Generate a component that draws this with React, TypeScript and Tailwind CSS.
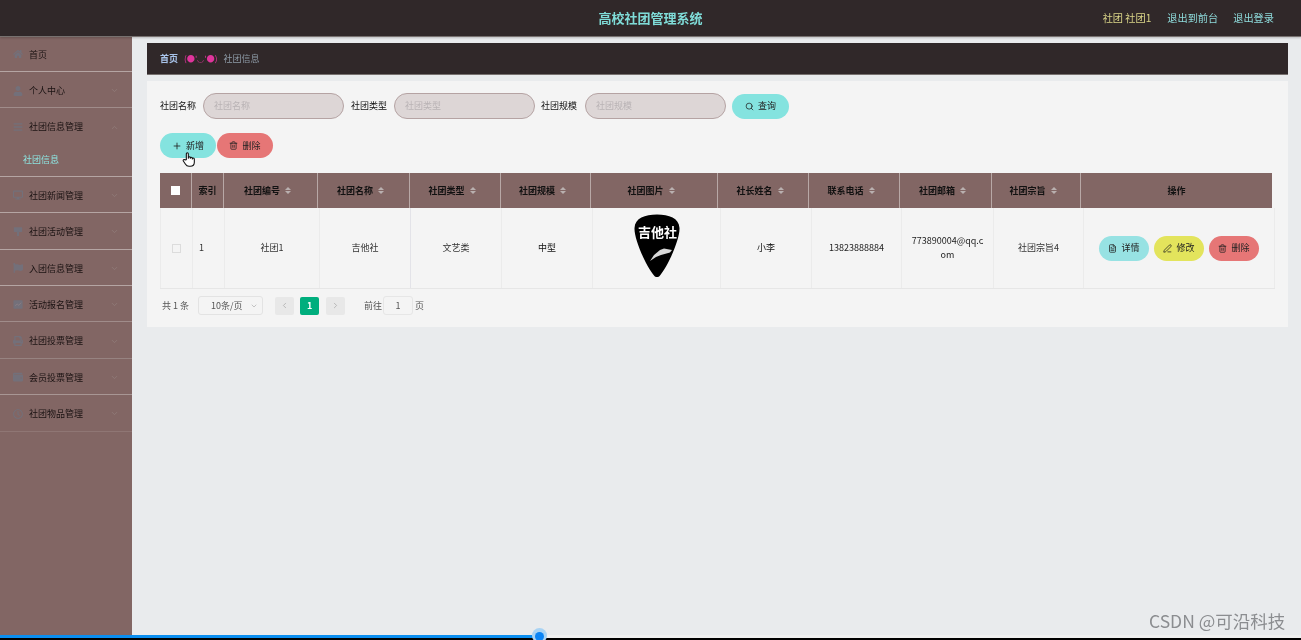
import { ChevronDown, ChevronLeft, ChevronRight, ChevronUp, Plus, Search, Trash2, FileText, PenLine } from 'lucide-react'
import { FaHome, FaUser, FaBars, FaDesktop, FaFlag, FaPrint, FaWallet, FaRegClock } from 'react-icons/fa'
import type { ReactNode } from 'react'

function SignIcon() {
  return (
    <svg viewBox="0 0 12 12" className="h-[11px] w-[11px]" fill="currentColor">
      <rect x="1" y="1" width="10" height="5.500" rx="0.500" />
      <rect x="4.800" y="6.500" width="2.400" height="5" />
    </svg>
  )
}

function ChartIcon() {
  return (
    <svg viewBox="0 0 12 12" className="h-[11px] w-[11px]">
      <rect x="0.500" y="1" width="11" height="10" rx="0.800" fill="currentColor" />
      <path d="M2.500 7.500L5 5.500L7 7L9.800 3.800" fill="none" stroke="#8f7f85" strokeWidth="0.900" />
    </svg>
  )
}

const menu: { label: string; icon: ReactNode; arrow?: 'up' | 'down'; sub?: string; line: string }[] = [
  { label: '首页', icon: <FaHome />, line: 'border-[#b5a5a3]' },
  { label: '个人中心', icon: <FaUser />, arrow: 'down', line: 'border-[#a08c8a]' },
  { label: '社团信息管理', icon: <FaBars />, arrow: 'up', sub: '社团信息', line: 'border-[#b5a5a3]' },
  { label: '社团新闻管理', icon: <FaDesktop />, arrow: 'down', line: 'border-[#b5a5a3]' },
  { label: '社团活动管理', icon: <SignIcon />, arrow: 'down', line: 'border-[#b5a5a3]' },
  { label: '入团信息管理', icon: <FaFlag />, arrow: 'down', line: 'border-[#b5a5a3]' },
  { label: '活动报名管理', icon: <ChartIcon />, arrow: 'down', line: 'border-[#a08c8a]' },
  { label: '社团投票管理', icon: <FaPrint />, arrow: 'down', line: 'border-[#978381]' },
  { label: '会员投票管理', icon: <FaWallet />, arrow: 'down', line: 'border-[#a89694]' },
  { label: '社团物品管理', icon: <FaRegClock />, arrow: 'down', line: 'border-[#8f7674]' },
]

const headCols = ['社团编号', '社团名称', '社团类型', '社团规模', '社团图片', '社长姓名', '联系电话', '社团邮箱', '社团宗旨']

function SortCaret() {
  return (
    <span className="ml-[5px] flex flex-col gap-[1px]">
      <span className="h-0 w-0 border-x-[3px] border-b-[3px] border-x-transparent border-b-[#b9b0af]" />
      <span className="h-0 w-0 border-x-[3px] border-t-[3px] border-x-transparent border-t-[#b9b0af]" />
    </span>
  )
}

function Pick() {
  return (
    <div className="relative mb-[4px] h-[64px] w-[46px]">
      <svg viewBox="0 0 46 64" className="h-full w-full">
        <path d="M23 0.500C35 0.500 45 4 45.500 14C46 25 34 52 26 61.500C24.500 63.500 21.500 63.500 20 61.500C12 52 0 25 0.500 14C1 4 11 0.500 23 0.500Z" fill="#000" />
        <path d="M16 47L20 41L26 36L30 34.500L38 36L36 38.500L27 41L22 43Z" fill="#d8d8d8" />
      </svg>
      <span className="absolute left-[1px] top-[9px] w-full text-center text-[13px] leading-[18px] font-bold whitespace-nowrap text-white">吉他社</span>
    </div>
  )
}

function SearchField({ label, placeholder, gap }: { label: string; placeholder: string; gap: string }) {
  return (
    <div className="flex items-center">
      <span className={`text-[9px] text-[#111] ${gap}`}>{label}</span>
      <div className="flex h-[26px] w-[141px] items-center rounded-[13px] border border-[#b5a3a3] bg-[#ddd6d6] pl-[10px] text-[9px] text-[#b9b3b5]">
        {placeholder}
      </div>
    </div>
  )
}

function PillButton({ color, icon, text, width }: { color: string; icon: ReactNode; text: string; width: string }) {
  return (
    <button className={`flex h-[25px] items-center justify-center gap-[4px] rounded-[13px] text-[9px] text-[#222] ${color} ${width}`}>
      {icon}
      {text}
    </button>
  )
}

export default function App() {
  return (
    <div className="relative flex h-[640px] w-[1301px] flex-col overflow-hidden bg-[#e9ebed] font-['Noto_Sans_CJK_SC','Liberation_Sans',sans-serif] blur-[0.3px]">
      <header className="relative z-10 flex h-[36px] shrink-0 items-center bg-[#302829] pr-[27px] shadow-[0_1px_0_#77716f,0_2px_2px_rgba(0,0,0,0.2)]">
        <div className="absolute left-0 w-full text-center text-[13px] font-bold text-[#7fdcd8]">高校社团管理系统</div>
        <div className="ml-auto flex items-center text-[10.2px]">
          <span className="text-[#d9d487]">社团 社团1</span>
          <span className="ml-[16px] text-[#8fdcdc]">退出到前台</span>
          <span className="ml-[15px] text-[#8fdcdc]">退出登录</span>
        </div>
      </header>

      <div className="flex min-h-0 flex-1">
        <aside className="mt-[-0.4px] w-[132px] shrink-0 bg-[#826664]">
          {menu.map((item) => (
            <div key={item.label} className={`border-b ${item.line}`}>
              <div className="flex h-[35.4px] items-center px-[13px] pt-[2px] text-[9px] text-[#1a1212]">
                <span className="mr-[6px] flex w-[10px] justify-center text-[10px] text-[#73707a]">{item.icon}</span>
                <span>{item.label}</span>
                {item.arrow === 'down' && <ChevronDown className="ml-auto text-[#917d7b]" size={9} />}
                {item.arrow === 'up' && <ChevronUp className="ml-auto text-[#917d7b]" size={9} />}
              </div>
              {item.sub && (
                <div className="flex h-[32px] items-center pb-[1px] pl-[23px] text-[9px] text-[#8de4e0]">{item.sub}</div>
              )}
            </div>
          ))}
        </aside>

        <main className="flex-1 pt-[7px] pl-[15px]">
          <div className="flex h-[32px] w-[1141px] items-center border-b border-[#77716f] bg-[#302829] pl-[13px] text-[9px]">
            <span className="font-bold text-[#a9c4ea]">首页</span>
            <span className="mx-[6px] text-[8.2px] text-[#e0359c]">(●'◡'●)</span>
            <span className="text-[#8d9aa6]">社团信息</span>
          </div>

          <section className="mt-[6px] h-[246px] w-[1141px] bg-[#f4f4f4] pt-[12px] pl-[13px]">
            <div className="flex items-center gap-[6px]">
              <div className="mr-[1px]">
                <SearchField label="社团名称" placeholder="社团名称" gap="mr-[7px]" />
              </div>
              <SearchField label="社团类型" placeholder="社团类型" gap="mr-[7px]" />
              <SearchField label="社团规模" placeholder="社团规模" gap="mr-[8px]" />
              <PillButton color="bg-[#84e3df]" width="w-[57px]" icon={<Search size={9} />} text="查询" />
            </div>

            <div className="mt-[14px] flex gap-[1px]">
              <PillButton color="bg-[#84e3df]" width="w-[56px]" icon={<Plus size={10} />} text="新增" />
              <PillButton color="bg-[#e67676]" width="w-[56px]" icon={<Trash2 size={9} />} text="删除" />
            </div>

            <div className="mt-[15px] w-[1115px]">
              <div className="grid h-[35px] w-[1112px] grid-cols-[32px_32px_94px_92px_91px_90px_127px_91px_91px_92px_89px_191px] bg-[#826664] text-[9px] font-bold text-[#111]">
                <div className="flex items-center justify-center border-r border-[#b8a8a6]">
                  <span className="h-[9px] w-[9px] bg-white" />
                </div>
                <div className="flex items-center justify-center border-r border-[#b8a8a6]">索引</div>
                {headCols.map((col) => (
                  <div key={col} className="flex items-center justify-center border-r border-[#b8a8a6] pr-[6px]">
                    {col}
                    <SortCaret />
                  </div>
                ))}
                <div className="flex items-center justify-center">操作</div>
              </div>

              <div className="grid h-[81px] grid-cols-[33px_32px_95px_91px_91px_91px_128px_91px_90px_92px_90px_191px] border-b border-[#e6e6e6] text-[9px] text-[#333]">
                <div className="flex items-center justify-center border-x border-[#ebebeb]">
                  <span className="h-[9px] w-[9px] border border-[#dcdcdc]" />
                </div>
                <div className="flex items-center border-r border-[#ebebeb] pl-[6px]">1</div>
                <div className="flex items-center justify-center border-r border-[#ebebeb]">社团1</div>
                <div className="flex items-center justify-center border-r border-[#e3e3e8]">吉他社</div>
                <div className="flex items-center justify-center border-r border-[#ebebeb]">文艺类</div>
                <div className="flex items-center justify-center border-r border-[#ebebeb] text-[#111]">中型</div>
                <div className="flex items-center justify-center border-r border-[#ebebeb]">
                  <Pick />
                </div>
                <div className="flex items-center justify-center border-r border-[#ebebeb] text-[#111]">小李</div>
                <div className="flex items-center justify-center border-r border-[#ebebeb] text-[#222]">13823888884</div>
                <div className="flex items-center justify-center border-r border-[#ebebeb] px-[8px] text-center leading-[14px] break-all text-[#222]">
                  773890004@qq.com
                </div>
                <div className="flex items-center justify-center border-r border-[#ebebeb]">社团宗旨4</div>
                <div className="flex items-center justify-center gap-[5px] border-r border-[#ebebeb]">
                  <PillButton color="bg-[#97e2e3]" width="w-[50px]" icon={<FileText size={9} />} text="详情" />
                  <PillButton color="bg-[#e3e45c]" width="w-[50px]" icon={<PenLine size={9} />} text="修改" />
                  <PillButton color="bg-[#e67676]" width="w-[50px]" icon={<Trash2 size={9} />} text="删除" />
                </div>
              </div>
            </div>

            <div className="mt-[7px] flex items-center pl-[2px] text-[9px] text-[#555]">
              <span>共 1 条</span>
              <div className="ml-[9px] flex h-[19px] w-[65px] items-center justify-between rounded-[3px] border border-[#e3e3e3] pr-[4px] pl-[12px] text-[#555]">
                10条/页
                <ChevronDown size={8} className="text-[#aaa]" />
              </div>
              <span className="ml-[12px] flex h-[18px] w-[19px] items-center justify-center rounded-[2px] bg-[#e8e8e8] text-[#aaa]">
                <ChevronLeft size={9} />
              </span>
              <span className="ml-[6px] flex h-[18px] w-[19px] items-center justify-center rounded-[2px] bg-[#00ae7d] font-bold text-white">1</span>
              <span className="ml-[7px] flex h-[18px] w-[19px] items-center justify-center rounded-[2px] bg-[#e8e8e8] text-[#aaa]">
                <ChevronRight size={9} />
              </span>
              <span className="ml-[19px]">前往</span>
              <span className="ml-[1px] flex h-[19px] w-[30px] items-center justify-center rounded-[3px] border border-[#e6e6e6]">1</span>
              <span className="ml-[2px]">页</span>
            </div>
          </section>
        </main>
      </div>

      {/* 视频播放条和水印 */}
      <span className="absolute top-[609px] left-[1149px] text-[17.5px] leading-[24px] whitespace-nowrap text-[#8b8d90]">CSDN @可沿科技</span>
      <div className="h-[3px] shrink-0 bg-[#f0f0f0]">
        <div className="h-full w-[538px] bg-[#0a8ef0]" />
      </div>
      <div className="h-[2px] shrink-0 bg-black" />
      <span className="absolute top-[628px] left-[532px] h-[15px] w-[15px] rounded-full bg-[#a9d3f3]" />
      <span className="absolute top-[632px] left-[535px] h-[9px] w-[9px] rounded-full bg-[#0a84f5]" />

      {/* 鼠标指针 */}
      <svg viewBox="0 0 24 24" className="absolute top-[150px] left-[181px] h-[18px] w-[16px]" fill="#fff" stroke="#111" strokeWidth="1.6" strokeLinejoin="round">
        <path d="M8 13V4a1.500 1.500 0 0 1 3 0v7l0-1a1.500 1.500 0 0 1 3 0v1a1.500 1.500 0 0 1 3 0v1a1.500 1.500 0 0 1 3 0v5c0 3.500-2.500 6-6 6h-2c-3 0-4-1-5.500-3.500L3.500 15a1.500 1.500 0 0 1 2.500-1.700Z" />
      </svg>
    </div>
  )
}
